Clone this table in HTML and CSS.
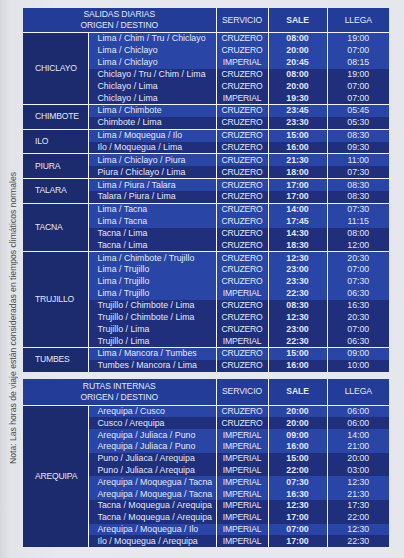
FILE: index.html
```html
<!DOCTYPE html>
<html lang="es">
<head>
<meta charset="utf-8">
<title>Salidas diarias</title>
<link rel="stylesheet" href="styles.css">
</head>
<body>
<div class="page">
  <div class="note"><span class="note-text">Nota: Las horas de viaje están consideradas en tiempos climáticos normales</span></div>
  <div class="tables">
    <table class="sched sched-main">
      <colgroup><col class="c-city"><col class="c-route"><col class="c-serv"><col class="c-sale"><col class="c-llega"></colgroup>
      <thead>
        <tr><th colspan="2">SALIDAS DIARIAS<br>ORIGEN / DESTINO</th><th>SERVICIO</th><th class="b">SALE</th><th>LLEGA</th></tr>
      </thead>
      <tbody>
        <tr class="hi"><td class="city" rowspan="6">CHICLAYO</td><td class="route">Lima / Chim / Tru / Chiclayo</td><td class="serv">CRUZERO</td><td class="b">08:00</td><td>19:00</td></tr>
        <tr class="hi"><td class="route">Lima / Chiclayo</td><td class="serv">CRUZERO</td><td class="b">20:00</td><td>07:00</td></tr>
        <tr class="hi"><td class="route">Lima / Chiclayo</td><td class="serv">IMPERIAL</td><td class="b">20:45</td><td>08:15</td></tr>
        <tr class="lo"><td class="route">Chiclayo / Tru / Chim / Lima</td><td class="serv">CRUZERO</td><td class="b">08:00</td><td>19:00</td></tr>
        <tr class="lo"><td class="route">Chiclayo / Lima</td><td class="serv">CRUZERO</td><td class="b">20:00</td><td>07:00</td></tr>
        <tr class="lo"><td class="route">Chiclayo / Lima</td><td class="serv">IMPERIAL</td><td class="b">19:30</td><td>07:00</td></tr>
      </tbody>
      <tbody>
        <tr class="hi"><td class="city" rowspan="2">CHIMBOTE</td><td class="route">Lima / Chimbote</td><td class="serv">CRUZERO</td><td class="b">23:45</td><td>05:45</td></tr>
        <tr class="lo"><td class="route">Chimbote / Lima</td><td class="serv">CRUZERO</td><td class="b">23:30</td><td>05:30</td></tr>
      </tbody>
      <tbody>
        <tr class="hi"><td class="city" rowspan="2">ILO</td><td class="route">Lima / Moquegua / Ilo</td><td class="serv">CRUZERO</td><td class="b">15:00</td><td>08:30</td></tr>
        <tr class="lo"><td class="route">Ilo / Moquegua / Lima</td><td class="serv">CRUZERO</td><td class="b">16:00</td><td>09:30</td></tr>
      </tbody>
      <tbody>
        <tr class="hi"><td class="city" rowspan="2">PIURA</td><td class="route">Lima / Chiclayo / Piura</td><td class="serv">CRUZERO</td><td class="b">21:30</td><td>11:00</td></tr>
        <tr class="lo"><td class="route">Piura / Chiclayo / Lima</td><td class="serv">CRUZERO</td><td class="b">18:00</td><td>07:30</td></tr>
      </tbody>
      <tbody>
        <tr class="hi"><td class="city" rowspan="2">TALARA</td><td class="route">Lima / Piura / Talara</td><td class="serv">CRUZERO</td><td class="b">17:00</td><td>08:30</td></tr>
        <tr class="lo"><td class="route">Talara / Piura / Lima</td><td class="serv">CRUZERO</td><td class="b">17:00</td><td>08:30</td></tr>
      </tbody>
      <tbody>
        <tr class="hi"><td class="city" rowspan="4">TACNA</td><td class="route">Lima / Tacna</td><td class="serv">CRUZERO</td><td class="b">14:00</td><td>07:30</td></tr>
        <tr class="hi"><td class="route">Lima / Tacna</td><td class="serv">CRUZERO</td><td class="b">17:45</td><td>11:15</td></tr>
        <tr class="lo"><td class="route">Tacna / Lima</td><td class="serv">CRUZERO</td><td class="b">14:30</td><td>08:00</td></tr>
        <tr class="lo"><td class="route">Tacna / Lima</td><td class="serv">CRUZERO</td><td class="b">18:30</td><td>12:00</td></tr>
      </tbody>
      <tbody>
        <tr class="hi"><td class="city" rowspan="8">TRUJILLO</td><td class="route">Lima / Chimbote / Trujillo</td><td class="serv">CRUZERO</td><td class="b">12:30</td><td>20:30</td></tr>
        <tr class="hi"><td class="route">Lima / Trujillo</td><td class="serv">CRUZERO</td><td class="b">23:00</td><td>07:00</td></tr>
        <tr class="hi"><td class="route">Lima / Trujillo</td><td class="serv">CRUZERO</td><td class="b">23:30</td><td>07:30</td></tr>
        <tr class="hi"><td class="route">Lima / Trujillo</td><td class="serv">IMPERIAL</td><td class="b">22:30</td><td>06:30</td></tr>
        <tr class="lo"><td class="route">Trujillo / Chimbote / Lima</td><td class="serv">CRUZERO</td><td class="b">08:30</td><td>16:30</td></tr>
        <tr class="lo"><td class="route">Trujillo / Chimbote / Lima</td><td class="serv">CRUZERO</td><td class="b">12:30</td><td>20:30</td></tr>
        <tr class="lo"><td class="route">Trujillo / Lima</td><td class="serv">CRUZERO</td><td class="b">23:00</td><td>07:00</td></tr>
        <tr class="lo"><td class="route">Trujillo / Lima</td><td class="serv">IMPERIAL</td><td class="b">22:30</td><td>06:30</td></tr>
      </tbody>
      <tbody>
        <tr class="hi"><td class="city" rowspan="2">TUMBES</td><td class="route">Lima / Mancora / Tumbes</td><td class="serv">CRUZERO</td><td class="b">15:00</td><td>09:00</td></tr>
        <tr class="lo"><td class="route">Tumbes / Mancora / Lima</td><td class="serv">CRUZERO</td><td class="b">16:00</td><td>10:00</td></tr>
      </tbody>
    </table>

    <table class="sched sched-int">
      <colgroup><col class="c-city"><col class="c-route"><col class="c-serv"><col class="c-sale"><col class="c-llega"></colgroup>
      <thead>
        <tr><th colspan="2">RUTAS INTERNAS<br>ORIGEN / DESTINO</th><th>SERVICIO</th><th class="b">SALE</th><th>LLEGA</th></tr>
      </thead>
      <tbody>
        <tr class="hi"><td class="city" rowspan="12">AREQUIPA</td><td class="route">Arequipa / Cusco</td><td class="serv">CRUZERO</td><td class="b">20:00</td><td>06:00</td></tr>
        <tr class="lo"><td class="route">Cusco / Arequipa</td><td class="serv">CRUZERO</td><td class="b">20:00</td><td>06:00</td></tr>
        <tr class="hi"><td class="route">Arequipa / Juliaca / Puno</td><td class="serv">IMPERIAL</td><td class="b">09:00</td><td>14:00</td></tr>
        <tr class="hi"><td class="route">Arequipa / Juliaca / Puno</td><td class="serv">IMPERIAL</td><td class="b">16:00</td><td>21:00</td></tr>
        <tr class="lo"><td class="route">Puno / Juliaca / Arequipa</td><td class="serv">IMPERIAL</td><td class="b">15:00</td><td>20:00</td></tr>
        <tr class="lo"><td class="route">Puno / Juliaca / Arequipa</td><td class="serv">IMPERIAL</td><td class="b">22:00</td><td>03:00</td></tr>
        <tr class="hi"><td class="route">Arequipa / Moquegua / Tacna</td><td class="serv">IMPERIAL</td><td class="b">07:30</td><td>12:30</td></tr>
        <tr class="hi"><td class="route">Arequipa / Moquegua / Tacna</td><td class="serv">IMPERIAL</td><td class="b">16:30</td><td>21:30</td></tr>
        <tr class="lo"><td class="route">Tacna / Moquegua / Arequipa</td><td class="serv">IMPERIAL</td><td class="b">12:30</td><td>17:30</td></tr>
        <tr class="lo"><td class="route">Tacna / Moquegua / Arequipa</td><td class="serv">IMPERIAL</td><td class="b">17:00</td><td>22:00</td></tr>
        <tr class="hi"><td class="route">Arequipa / Moquegua / Ilo</td><td class="serv">IMPERIAL</td><td class="b">07:00</td><td>12:30</td></tr>
        <tr class="lo"><td class="route">Ilo / Moquegua / Arequipa</td><td class="serv">IMPERIAL</td><td class="b">17:00</td><td>22:30</td></tr>
      </tbody>
    </table>
  </div>
</div>
</body>
</html>
```

FILE: styles.css
```css
html, body {
  margin: 0;
  padding: 0;
}

body {
  background: #e5e6eb;
  font-family: "Liberation Sans", Arial, sans-serif;
  width: 404px;
  height: 558px;
  overflow: hidden;
}

.page {
  display: flex;
  align-items: flex-start;
  padding-top: 8px;
  background: linear-gradient(90deg, #d6d7dc 0, #e3e4e9 10px, #e8e9ee 60px, #e6e7ec 100%);
  height: 550px;
}

.note {
  flex: none;
  width: 23px;
  height: 300px;
  margin-top: 160px;
  display: flex;
  align-items: center;
  justify-content: center;
  padding-left: 3px;
  box-sizing: border-box;
}

.note-text {
  writing-mode: vertical-rl;
  transform: rotate(180deg);
  font-size: 8.6px;
  color: #4b4c52;
  white-space: nowrap;
}

.tables {
  display: flex;
  flex-direction: column;
  gap: 7px;
}

.sched {
  border-collapse: collapse;
  table-layout: fixed;
  width: 366px;
  color: #e3e8f7;
  font-size: 8.8px;
}

.c-city { width: 65px; }
.c-route { width: 128px; }
.c-serv { width: 52px; }
.c-sale { width: 59px; }
.c-llega { width: 62px; }

.sched th {
  background: #233c98;
  font-weight: normal;
  font-size: 8.6px;
  line-height: 11px;
  height: 24px;
  padding: 0;
  text-align: center;
  letter-spacing: -0.1px;
  border-left: 1px solid #f3f4f8;
  border-bottom: 1px solid #f3f4f8;
}

.sched-int th {
  height: 26px;
}

.sched th:first-child {
  border-left: none;
}

.sched td {
  height: 11.85px;
  padding: 0;
  line-height: 11px;
  text-align: center;
  white-space: nowrap;
  border-left: 1px solid #f3f4f8;
}

.sched-int td {
  height: 11.8px;
}

.sched tbody + tbody tr:first-child td,
.sched tbody + tbody td.city {
  border-top: 1px solid #f3f4f8;
}

.sched td.city {
  border-left: none;
  text-align: left;
  padding-left: 12px;
  font-size: 8.6px;
  letter-spacing: -0.2px;
}

.sched td.route {
  text-align: left;
  padding-left: 9px;
}

.sched td.serv {
  font-size: 8.6px;
  letter-spacing: -0.2px;
}

.sched .b {
  font-weight: bold;
}

.sched tr.hi td {
  background-color: #2945a6;
}

.sched tr.lo td {
  background-color: #1f2f7c;
}

.sched tr td.city {
  background-color: #1c2a6e;
}
```
